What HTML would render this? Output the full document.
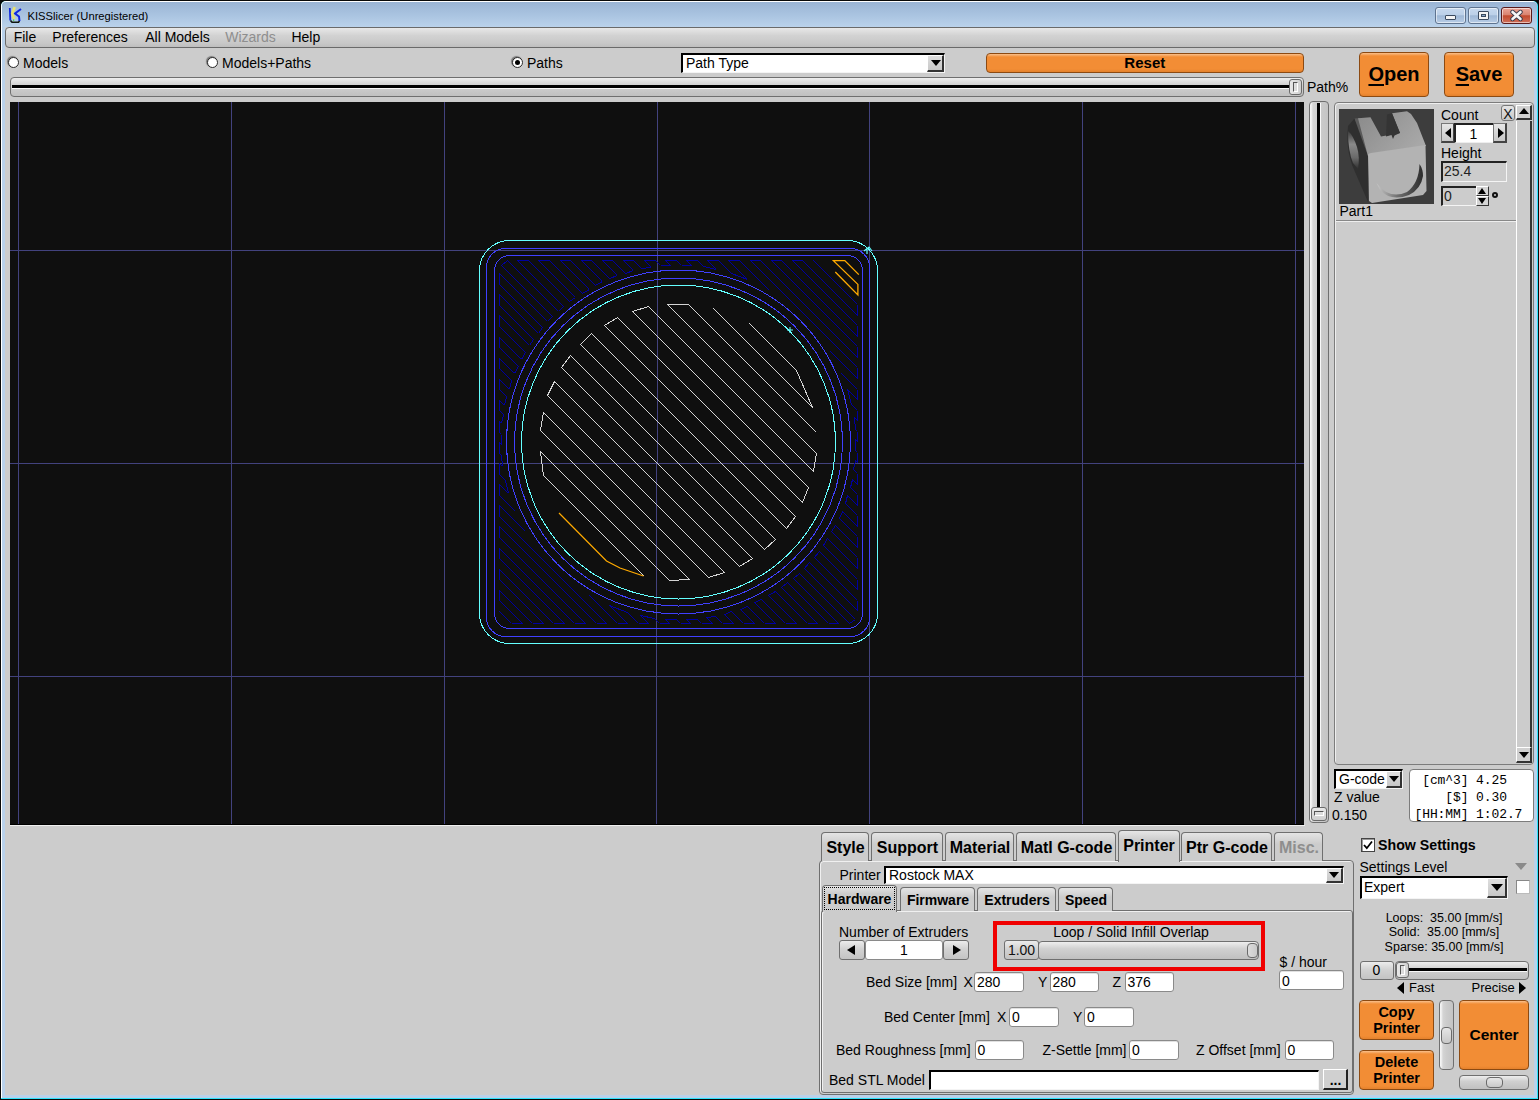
<!DOCTYPE html><html><head><meta charset="utf-8"><style>
*{margin:0;padding:0;box-sizing:border-box}
html,body{width:1539px;height:1100px;overflow:hidden}
body{background:#cccccc;position:relative;font-family:'Liberation Sans',sans-serif}
.a{position:absolute}
.t{white-space:pre}
.btn{border:1px solid #6f6f6f;border-radius:3px;background:linear-gradient(#ececec,#d2d2d2 45%,#c4c4c4)}
.rbox{border:1px solid #7a7a7a;border-radius:3px;background:#cccccc}
.org{border:1px solid #8c4a12;border-radius:4px;background:linear-gradient(#f9c08c 0,#f28d35 3px,#f28d35 calc(100% - 3px),#e4812c)}
.inp{background:#fff;border:1px solid #8a8a8a;border-radius:3px;box-shadow:inset 0 1px 0 #e0e0e0}
.sunk{background:#fff;border-top:2px solid #000;border-left:2px solid #000;border-right:1px solid #f4f4f4;border-bottom:1px solid #f4f4f4}
.sunkg{background:#cccccc;border-top:2px solid #222;border-left:2px solid #222;border-right:1px solid #f4f4f4;border-bottom:1px solid #f4f4f4}
.ddb{background:linear-gradient(#dedede,#c8c8c8);border-right:2px solid #333;border-bottom:2px solid #333;border-top:1px solid #fff;border-left:1px solid #fff}
.tab{border:1px solid #6f6f6f;border-bottom:none;border-radius:4px 4px 0 0;background:linear-gradient(#e4e4e4,#cccccc 40%)}
.sl{border:1px solid #6f6f6f;border-radius:4px;background:linear-gradient(#eeeeee,#d0d0d0 40%,#c0c0c0)}
</style></head><body>
<div class="a " style="left:0px;top:0px;width:1539px;height:1100px;background:#080808"></div>
<div class="a " style="left:1px;top:1px;width:1537px;height:1098px;background:#2ee2fa;border-radius:5px 5px 0 0"></div>
<div class="a " style="left:1px;top:1px;width:1536px;height:1097px;background:#ffffff;border-radius:5px 5px 0 0"></div>
<div class="a " style="left:2px;top:2px;width:1535px;height:1096px;background:#b9d1ea;border-radius:4px 4px 0 0"></div>
<div class="a " style="left:2px;top:2px;width:1535px;height:25px;background:linear-gradient(#9ab4d4,#a9c3e0 50%,#bad2eb);border-radius:4px 4px 0 0"></div>
<div class="a " style="left:5px;top:27px;width:1529px;height:1068px;background:#cccccc"></div>
<svg class="a" style="left:0px;top:0px" width="30" height="30" viewBox="0 0 30 30">
<path d="M9.8 8 L10.3 20.5" stroke="#1028e0" stroke-width="1.8" fill="none"/>
<path d="M21 9 L15 13.5 L19 16.5 L19.5 21" stroke="#1028e0" stroke-width="2" fill="none"/>
<path d="M14.7 7 L12.2 13.5 L14.2 19" stroke="#e6e070" stroke-width="2.6" fill="none"/>
<path d="M10.5 20.5 L12 22.3 L18.5 22.3 L19.5 21" stroke="#101810" stroke-width="1.6" fill="none"/>
<rect x="13" y="19.5" width="1.2" height="1.2" fill="#30d030"/>
</svg>
<div class="a t" style="left:27.5px;top:11px;font:normal 11.2px/11.2px 'Liberation Sans',sans-serif;color:#000;">KISSlicer (Unregistered)</div>
<div class="a " style="left:1435px;top:7px;width:31px;height:17px;border:1px solid #5f7490;border-radius:3px;background:linear-gradient(#c7d9ee,#bcd0e8 45%,#9fb8d6 52%,#b8cde6);box-shadow:inset 0 0 0 1px rgba(255,255,255,0.55)"></div>
<div class="a " style="left:1468px;top:7px;width:31px;height:17px;border:1px solid #5f7490;border-radius:3px;background:linear-gradient(#c7d9ee,#bcd0e8 45%,#9fb8d6 52%,#b8cde6);box-shadow:inset 0 0 0 1px rgba(255,255,255,0.55)"></div>
<div class="a " style="left:1501px;top:7px;width:31px;height:17px;border:1px solid #5a1a1a;border-radius:3px;background:linear-gradient(#eba597,#d98370 45%,#c24a2e 52%,#d0705a);box-shadow:inset 0 0 0 1px rgba(255,255,255,0.55)"></div>
<div class="a " style="left:1445px;top:15px;width:11px;height:5px;background:#f4f4f4;border:1px solid #3b4a5e;border-radius:1px"></div>
<div class="a " style="left:1478px;top:11px;width:11px;height:9px;background:#f4f4f4;border:1px solid #3b4a5e;border-radius:1px"></div>
<div class="a " style="left:1481px;top:14px;width:5px;height:3px;background:#8aa6c6;border:1px solid #3b4a5e"></div>
<svg class="a" style="left:1509px;top:9px" width="16" height="13" viewBox="0 0 16 13">
<path d="M3.5 3 L11.5 10 M11.5 3 L3.5 10" stroke="#3a3a4a" stroke-width="4.4" stroke-linecap="round"/>
<path d="M3.5 3 L11.5 10 M11.5 3 L3.5 10" stroke="#f6f6f6" stroke-width="2.6" stroke-linecap="round"/>
</svg>
<div class="a " style="left:5px;top:27px;width:1530px;height:21px;border:1px solid #6a6a6a;border-radius:4px;background:linear-gradient(#e8e8e8,#d2d2d2 40%,#c8c8c8 80%,#bebebe)"></div>
<div class="a t" style="left:13.7px;top:30px;font:normal 14px/14px 'Liberation Sans',sans-serif;color:#000;">File</div>
<div class="a t" style="left:52.3px;top:30px;font:normal 14px/14px 'Liberation Sans',sans-serif;color:#000;">Preferences</div>
<div class="a t" style="left:145.2px;top:30px;font:normal 14px/14px 'Liberation Sans',sans-serif;color:#000;">All Models</div>
<div class="a t" style="left:225.2px;top:30px;font:normal 14px/14px 'Liberation Sans',sans-serif;color:#8e8e8e;">Wizards</div>
<div class="a t" style="left:291.4px;top:30px;font:normal 14px/14px 'Liberation Sans',sans-serif;color:#000;">Help</div>
<div class="a" style="left:8px;top:57px;width:11px;height:11px;border-radius:50%;background:#fff;border:1.5px solid #2a2a2a;box-shadow:-1px -1px 1px #777"></div>
<div class="a t" style="left:23px;top:56px;font:normal 14px/14px 'Liberation Sans',sans-serif;color:#000;">Models</div>
<div class="a" style="left:207px;top:57px;width:11px;height:11px;border-radius:50%;background:#fff;border:1.5px solid #2a2a2a;box-shadow:-1px -1px 1px #777"></div>
<div class="a t" style="left:222px;top:56px;font:normal 14px/14px 'Liberation Sans',sans-serif;color:#000;">Models+Paths</div>
<div class="a" style="left:512px;top:57px;width:11px;height:11px;border-radius:50%;background:#fff;border:1.5px solid #2a2a2a;box-shadow:-1px -1px 1px #777"></div>
<div class="a" style="left:515px;top:60px;width:5px;height:5px;border-radius:50%;background:#000"></div>
<div class="a t" style="left:527px;top:56px;font:normal 14px/14px 'Liberation Sans',sans-serif;color:#000;">Paths</div>
<div class="a sunk" style="left:681px;top:53px;width:264px;height:20px;"></div>
<div class="a ddb" style="left:927px;top:55px;width:17px;height:17px;"></div>
<div class="a" style="left:931px;top:60px;width:0;height:0;border-left:5px solid transparent;border-right:5px solid transparent;border-top:6px solid #000"></div>
<div class="a t" style="left:686px;top:56px;font:normal 14px/14px 'Liberation Sans',sans-serif;color:#000;">Path Type</div>
<div class="a org" style="left:986px;top:53px;width:318px;height:20px;"></div>
<div class="a t" style="left:1104.8px;top:55px;width:80px;text-align:center;font:bold 15px/15px 'Liberation Sans',sans-serif;color:#000;">Reset</div>
<div class="a org" style="left:1359px;top:52px;width:70px;height:45px;"></div>
<div class="a org" style="left:1444px;top:52px;width:70px;height:45px;"></div>
<div class="a t" style="left:1359px;top:64px;width:70px;text-align:center;font:bold 20px/20px 'Liberation Sans',sans-serif;color:#000;"><u style="text-decoration-thickness:2px;text-underline-offset:3px">O</u>pen</div>
<div class="a t" style="left:1444px;top:64px;width:70px;text-align:center;font:bold 20px/20px 'Liberation Sans',sans-serif;color:#000;"><u style="text-decoration-thickness:2px;text-underline-offset:3px">S</u>ave</div>
<div class="a sl" style="left:10px;top:77px;width:1294px;height:20px;"></div>
<div class="a " style="left:12px;top:85px;width:1278px;height:3px;background:#000"></div>
<div class="a " style="left:12px;top:88px;width:1278px;height:1px;background:#f8f8f8"></div>
<div class="a " style="left:1289px;top:79px;width:13px;height:16px;border:1px solid #6a6a6a;border-radius:3px;background:linear-gradient(90deg,#e8e8e8,#d0d0d0)"></div>
<div class="a " style="left:1293px;top:82px;width:5px;height:10px;border-left:1px solid #555;border-top:1px solid #555;border-right:1px solid #fff;border-bottom:1px solid #fff"></div>
<div class="a t" style="left:1307px;top:80px;font:normal 14px/14px 'Liberation Sans',sans-serif;color:#000;">Path%</div>
<svg class="a" style="left:10px;top:102px" width="1294" height="723" viewBox="10 102 1294 723" shape-rendering="crispEdges">
<rect x="10" y="102" width="1294" height="723" fill="#0f0f0f"/>
<line x1="18.5" y1="102" x2="18.5" y2="825" stroke="#42427e" stroke-width="1"/>
<line x1="231.5" y1="102" x2="231.5" y2="825" stroke="#42427e" stroke-width="1"/>
<line x1="444.5" y1="102" x2="444.5" y2="825" stroke="#42427e" stroke-width="1"/>
<line x1="869.5" y1="102" x2="869.5" y2="825" stroke="#42427e" stroke-width="1"/>
<line x1="1082.5" y1="102" x2="1082.5" y2="825" stroke="#42427e" stroke-width="1"/>
<line x1="1295.5" y1="102" x2="1295.5" y2="825" stroke="#42427e" stroke-width="1"/>
<rect x="657" y="102" width="1" height="361" fill="#42427e"/>
<rect x="656" y="463" width="1" height="362" fill="#42427e"/>
<line x1="10" y1="250.5" x2="1304" y2="250.5" stroke="#42427e" stroke-width="1"/>
<line x1="10" y1="463.5" x2="1304" y2="463.5" stroke="#42427e" stroke-width="1"/>
<line x1="10" y1="676.5" x2="1304" y2="676.5" stroke="#42427e" stroke-width="1"/>
<path d="M499.5 611.5L511.5 623.5M499.5 600.5L522.5 623.5M511.5 623.5L522.5 623.5M499.5 590.5L532.5 623.5M499.5 600.5L499.5 590.5M499.5 579.5L543.5 623.5M532.5 623.5L543.5 623.5M499.5 569.5L553.5 623.5M499.5 579.5L499.5 569.5M499.5 558.5L564.5 623.5M553.5 623.5L564.5 623.5M499.5 548.5L574.5 623.5M499.5 558.5L499.5 548.5M499.5 537.5L585.5 623.5M574.5 623.5L585.5 623.5M499.5 526.5L596.5 623.5M499.5 537.5L499.5 526.5M499.5 516.5L606.5 623.5M596.5 623.5L606.5 623.5M499.5 505.5L525.5 531.5M499.5 516.5L499.5 505.5M589.5 595.5L617.5 623.5M499.5 495.5L515.5 511.5M609.5 605.5L627.5 623.5M617.5 623.5L627.5 623.5M499.5 484.5L508.5 493.5M499.5 495.5L499.5 484.5M627.5 612.5L638.5 623.5M609.5 605.5L627.5 612.5M499.5 474.5L505.5 480.5M508.5 493.5L505.5 480.5M640.5 615.5L648.5 623.5M638.5 623.5L648.5 623.5M499.5 463.5L502.5 466.5M499.5 474.5L499.5 463.5M654.5 618.5L659.5 623.5M640.5 615.5L654.5 618.5M499.5 453.5L501.5 455.5M502.5 466.5L501.5 455.5M665.5 619.5L669.5 623.5M659.5 623.5L669.5 623.5M499.5 442.5L501.5 444.5M499.5 453.5L499.5 442.5M676.5 619.5L680.5 623.5M665.5 619.5L676.5 619.5M499.5 432.5L501.5 434.5M501.5 444.5L501.5 434.5M686.5 619.5L690.5 623.5M680.5 623.5L690.5 623.5M499.5 421.5L501.5 423.5M499.5 432.5L499.5 421.5M697.5 619.5L701.5 623.5M686.5 619.5L697.5 619.5M499.5 410.5L503.5 414.5M501.5 423.5L503.5 414.5M706.5 617.5L712.5 623.5M701.5 623.5L712.5 623.5M499.5 400.5L504.5 405.5M499.5 410.5L499.5 400.5M715.5 616.5L722.5 623.5M706.5 617.5L715.5 616.5M499.5 389.5L506.5 396.5M504.5 405.5L506.5 396.5M724.5 614.5L733.5 623.5M722.5 623.5L733.5 623.5M499.5 379.5L509.5 389.5M499.5 389.5L499.5 379.5M731.5 611.5L743.5 623.5M724.5 614.5L731.5 611.5M499.5 368.5L511.5 380.5M509.5 389.5L511.5 380.5M740.5 609.5L754.5 623.5M743.5 623.5L754.5 623.5M499.5 358.5L514.5 373.5M499.5 368.5L499.5 358.5M747.5 606.5L764.5 623.5M740.5 609.5L747.5 606.5M499.5 347.5L518.5 366.5M514.5 373.5L518.5 366.5M754.5 602.5L775.5 623.5M764.5 623.5L775.5 623.5M499.5 337.5L521.5 359.5M499.5 347.5L499.5 337.5M761.5 599.5L785.5 623.5M754.5 602.5L761.5 599.5M499.5 326.5L525.5 352.5M521.5 359.5L525.5 352.5M768.5 595.5L796.5 623.5M785.5 623.5L796.5 623.5M499.5 315.5L529.5 345.5M499.5 326.5L499.5 315.5M775.5 591.5L807.5 623.5M768.5 595.5L775.5 591.5M499.5 305.5L533.5 339.5M529.5 345.5L533.5 339.5M781.5 587.5L817.5 623.5M807.5 623.5L817.5 623.5M499.5 294.5L538.5 333.5M499.5 305.5L499.5 294.5M787.5 582.5L828.5 623.5M781.5 587.5L787.5 582.5M499.5 284.5L542.5 327.5M538.5 333.5L542.5 327.5M793.5 578.5L838.5 623.5M828.5 623.5L838.5 623.5M499.5 273.5L547.5 321.5M499.5 284.5L499.5 273.5M799.5 573.5L849.5 623.5M793.5 578.5L799.5 573.5M501.5 265.5L552.5 316.5M547.5 321.5L552.5 316.5M804.5 568.5L855.5 619.5M849.5 623.5L855.5 619.5M507.5 260.5L558.5 311.5M501.5 265.5L507.5 260.5M809.5 562.5L857.5 610.5M804.5 568.5L809.5 562.5M517.5 260.5L563.5 306.5M558.5 311.5L563.5 306.5M814.5 557.5L857.5 600.5M857.5 610.5L857.5 600.5M528.5 260.5L569.5 301.5M517.5 260.5L528.5 260.5M819.5 551.5L857.5 589.5M814.5 557.5L819.5 551.5M538.5 260.5L575.5 297.5M569.5 301.5L575.5 297.5M823.5 545.5L857.5 579.5M857.5 589.5L857.5 579.5M549.5 260.5L582.5 293.5M538.5 260.5L549.5 260.5M827.5 538.5L857.5 568.5M823.5 545.5L827.5 538.5M560.5 260.5L589.5 289.5M582.5 293.5L589.5 289.5M831.5 531.5L857.5 557.5M857.5 568.5L857.5 557.5M570.5 260.5L595.5 285.5M560.5 260.5L570.5 260.5M835.5 525.5L857.5 547.5M831.5 531.5L835.5 525.5M581.5 260.5L602.5 281.5M595.5 285.5L602.5 281.5M839.5 518.5L857.5 536.5M857.5 547.5L857.5 536.5M591.5 260.5L609.5 278.5M581.5 260.5L591.5 260.5M842.5 511.5L857.5 526.5M839.5 518.5L842.5 511.5M602.5 260.5L617.5 275.5M609.5 278.5L617.5 275.5M845.5 503.5L857.5 515.5M857.5 526.5L857.5 515.5M612.5 260.5L625.5 273.5M602.5 260.5L612.5 260.5M847.5 495.5L857.5 505.5M845.5 503.5L847.5 495.5M623.5 260.5L633.5 270.5M625.5 273.5L633.5 270.5M850.5 487.5L857.5 494.5M857.5 505.5L857.5 494.5M633.5 260.5L641.5 268.5M623.5 260.5L633.5 260.5M852.5 479.5L857.5 484.5M850.5 487.5L852.5 479.5M644.5 260.5L651.5 267.5M641.5 268.5L651.5 267.5M853.5 469.5L857.5 473.5M857.5 484.5L857.5 473.5M655.5 260.5L660.5 265.5M644.5 260.5L655.5 260.5M855.5 460.5L857.5 462.5M853.5 469.5L855.5 460.5M665.5 260.5L670.5 265.5M660.5 265.5L670.5 265.5M855.5 450.5L857.5 452.5M857.5 462.5L857.5 452.5M676.5 260.5L681.5 265.5M665.5 260.5L676.5 260.5M855.5 439.5L857.5 441.5M855.5 450.5L855.5 439.5M686.5 260.5L691.5 265.5M681.5 265.5L691.5 265.5M855.5 429.5L857.5 431.5M857.5 441.5L857.5 431.5M697.5 260.5L703.5 266.5M686.5 260.5L697.5 260.5M854.5 417.5L857.5 420.5M855.5 429.5L854.5 417.5M707.5 260.5L716.5 269.5M703.5 266.5L716.5 269.5M851.5 404.5L857.5 410.5M857.5 420.5L857.5 410.5M718.5 260.5L731.5 273.5M707.5 260.5L718.5 260.5M847.5 389.5L857.5 399.5M851.5 404.5L847.5 389.5M728.5 260.5L747.5 279.5M731.5 273.5L747.5 279.5M841.5 373.5L857.5 389.5M857.5 399.5L857.5 389.5M739.5 260.5L769.5 290.5M728.5 260.5L739.5 260.5M830.5 351.5L857.5 378.5M750.5 260.5L857.5 367.5M857.5 378.5L857.5 367.5M760.5 260.5L857.5 357.5M750.5 260.5L760.5 260.5M771.5 260.5L857.5 346.5M857.5 357.5L857.5 346.5M781.5 260.5L857.5 336.5M771.5 260.5L781.5 260.5M792.5 260.5L857.5 325.5M857.5 336.5L857.5 325.5M802.5 260.5L857.5 315.5M792.5 260.5L802.5 260.5M813.5 260.5L857.5 304.5M857.5 315.5L857.5 304.5" stroke="#0000a0" stroke-width="1" fill="none"/>
<rect x="479.5" y="240.5" width="398" height="403" rx="30" fill="none" stroke="#64ffff" stroke-width="1"/>
<rect x="486.5" y="248.5" width="383" height="388" rx="19" fill="none" stroke="#4040ff" stroke-width="1"/>
<rect x="494.5" y="255.5" width="368" height="373" rx="15" fill="none" stroke="#4040ff" stroke-width="1"/>
<circle cx="678.5" cy="442" r="172" fill="none" stroke="#4040ff" stroke-width="1"/>
<circle cx="678.5" cy="442" r="164" fill="none" stroke="#4040ff" stroke-width="1"/>
<circle cx="678.5" cy="442" r="157" fill="none" stroke="#64ffff" stroke-width="1"/>
<path d="M644.5 576.5L543.5 475.5L540.5 451.5L669.5 580.5L689.5 579.5L540.5 430.5L543.5 412.5L708.5 577.5L724.5 572.5L547.5 395.5L554.5 381.5L739.5 566.5L752.5 558.5L561.5 367.5L570.5 355.5L764.5 549.5L775.5 539.5L580.5 344.5L591.5 333.5L786.5 528.5L795.5 516.5L604.5 325.5L617.5 317.5L802.5 502.5L808.5 487.5L632.5 311.5L648.5 306.5L813.5 471.5L816.5 453.5L667.5 304.5L688.5 304.5L816.5 432.5M713.5 308.5L812.5 407.5L796.5 370.5L749.5 323.5" stroke="#d4d4d4" stroke-width="1" fill="none"/>
<path d="M559 513L606.5 561L620 568L643.5 576" stroke="#ffaa00" stroke-width="1.2" fill="none" shape-rendering="auto"/>
<path d="M858.8 274.6L844.8 260.6L833.4 260.6L857.9 284.4L857.9 295L835.3 272" stroke="#ffaa00" stroke-width="1.3" fill="none" shape-rendering="auto"/>
<path d="M864 251L869 247L872 251M867 248L867 254" stroke="#64ffff" stroke-width="1.2" fill="none" shape-rendering="auto"/>
<path d="M787 330L793 330M790 327L790 333" stroke="#64ffff" stroke-width="1" fill="none" shape-rendering="auto"/>
</svg>
<div class="a " style="left:10px;top:824px;width:1294px;height:1px;background:#000"></div>
<div class="a " style="left:10px;top:825px;width:1295px;height:1px;background:#f0f0f0"></div>
<div class="a " style="left:1309px;top:101px;width:20px;height:722px;border:1px solid #6f6f6f;border-radius:4px;background:linear-gradient(90deg,#f4f4f4 0,#f4f4f4 1px,#d4d4d4 3px,#cccccc 50%,#c4c4c4)"></div>
<div class="a " style="left:1317px;top:103px;width:3px;height:706px;background:#000"></div>
<div class="a " style="left:1320px;top:103px;width:1px;height:706px;background:#f8f8f8"></div>
<div class="a " style="left:1311px;top:807px;width:16px;height:14px;border:1px solid #6a6a6a;border-radius:3px;background:linear-gradient(#e8e8e8,#cfcfcf)"></div>
<div class="a " style="left:1314px;top:811px;width:10px;height:5px;border-left:1px solid #555;border-top:1px solid #555;border-right:1px solid #fff;border-bottom:1px solid #fff"></div>
<div class="a " style="left:1334px;top:102px;width:200px;height:663px;border:1px solid #7c7c7c;border-radius:4px;background:#cccccc;box-shadow:inset 1px 1px 0 #eee"></div>
<svg class="a" style="left:1339px;top:109px" width="95" height="95" viewBox="0 0 95 95">
<defs>
<linearGradient id="gh" x1="0" y1="0" x2="0" y2="1"><stop offset="0" stop-color="#3a3a3a"/><stop offset="0.35" stop-color="#8a8a8a"/><stop offset="0.7" stop-color="#6a6a6a"/><stop offset="1" stop-color="#303030"/></linearGradient>
<linearGradient id="gl" x1="0" y1="0" x2="1" y2="0.2"><stop offset="0" stop-color="#3a3a3a"/><stop offset="0.3" stop-color="#777"/><stop offset="0.55" stop-color="#3a3a3a"/><stop offset="1" stop-color="#2e2e2e"/></linearGradient>
<linearGradient id="gt" x1="0" y1="0" x2="1" y2="0.6"><stop offset="0" stop-color="#8a8a8a"/><stop offset="0.6" stop-color="#9c9c9c"/><stop offset="1" stop-color="#a8a8a8"/></linearGradient>
<linearGradient id="ga" x1="0" y1="0" x2="1" y2="0"><stop offset="0" stop-color="#c8c8c8"/><stop offset="0.45" stop-color="#707070"/><stop offset="1" stop-color="#2c2c2c"/></linearGradient>
</defs>
<rect width="95" height="95" fill="#3d3d3d"/>
<path d="M15.5 9.5 L9 17 Q7.5 32 10 45 L13 56 L29 93 L31 45 Z" fill="#2f2f2f"/>
<path d="M9 22 Q14 26 18 38 Q21 48 19 60 L14 54 Q9 42 9 22Z" fill="url(#gh)"/>
<path d="M15.5 9.5 L21 9 L31 46 L29 47 Z" fill="#5a5a5a"/>
<path d="M19 9.2 L31.5 8.3 L42 27.5 L61 24 L53 4.3 L68 2.3 L72 5 L78 14 L87 37 L29 47 Z" fill="url(#gt)"/>
<path d="M48 5.5 L53 4.3 L61 24 L55.5 26.5 L54 30 L52.5 26 L47 27.5 Z" fill="#343434"/>
<path d="M29 45.5 Q30 44 32 44 L86.5 36 L87.5 82 L84 86 L33 94 L30 92 Z" fill="#b3b3b3"/>
<path d="M37.5 74 Q50 91 68 83 Q80 74 80.5 55 Q84 60 84 67 Q82 80 70 86 Q52 93 41 81 Z" fill="url(#ga)"/>
</svg>
<div class="a t" style="left:1339.5px;top:204px;font:normal 14px/14px 'Liberation Sans',sans-serif;color:#000;">Part1</div>
<div class="a " style="left:1336px;top:220px;width:180px;height:1px;background:#888"></div>
<div class="a " style="left:1336px;top:221px;width:180px;height:1px;background:#eee"></div>
<div class="a t" style="left:1441px;top:108px;font:normal 14px/14px 'Liberation Sans',sans-serif;color:#000;">Count</div>
<div class="a " style="left:1441px;top:123px;width:14px;height:20px;border:1px solid #777;border-right:2px solid #444;border-bottom:2px solid #444;background:linear-gradient(#e6e6e6,#c8c8c8)"></div>
<div class="a " style="left:1454px;top:123px;width:40px;height:20px;background:#fff;border-top:2px solid #222;border-left:2px solid #222;border-right:1px solid #eee;border-bottom:1px solid #eee"></div>
<div class="a " style="left:1493px;top:123px;width:14px;height:20px;border:1px solid #777;border-right:2px solid #444;border-bottom:2px solid #444;background:linear-gradient(#e6e6e6,#c8c8c8)"></div>
<div class="a" style="left:1445px;top:128px;width:0;height:0;border-top:5px solid transparent;border-bottom:5px solid transparent;border-right:6px solid #000"></div>
<div class="a" style="left:1498px;top:128px;width:0;height:0;border-top:5px solid transparent;border-bottom:5px solid transparent;border-left:6px solid #000"></div>
<div class="a t" style="left:1458.5px;top:127px;width:30px;text-align:center;font:normal 14px/14px 'Liberation Sans',sans-serif;color:#000;">1</div>
<div class="a t" style="left:1441px;top:146px;font:normal 14px/14px 'Liberation Sans',sans-serif;color:#000;">Height</div>
<div class="a sunkg" style="left:1441px;top:161px;width:66px;height:21px;"></div>
<div class="a t" style="left:1444px;top:164px;font:normal 14px/14px 'Liberation Sans',sans-serif;color:#222;">25.4</div>
<div class="a sunkg" style="left:1441px;top:186px;width:36px;height:20px;"></div>
<div class="a t" style="left:1444px;top:189px;font:normal 14px/14px 'Liberation Sans',sans-serif;color:#222;">0</div>
<div class="a " style="left:1476px;top:186px;width:13px;height:10px;border:1px solid #fff;border-right:1px solid #333;border-bottom:1px solid #333;background:#d4d4d4"></div>
<div class="a " style="left:1476px;top:196px;width:13px;height:10px;border:1px solid #fff;border-right:1px solid #333;border-bottom:1px solid #333;background:#d4d4d4"></div>
<div class="a" style="left:1478px;top:188px;width:0;height:0;border-left:4.5px solid transparent;border-right:4.5px solid transparent;border-bottom:6px solid #000"></div>
<div class="a" style="left:1478px;top:198px;width:0;height:0;border-left:4.5px solid transparent;border-right:4.5px solid transparent;border-top:6px solid #000"></div>
<div class="a" style="left:1491.5px;top:191.5px;width:6.5px;height:6.5px;border:2px solid #111;border-radius:50%"></div>
<div class="a " style="left:1501px;top:105px;width:14px;height:16px;border:1px solid #777;border-radius:3px;background:linear-gradient(#e4e4e4,#c8c8c8)"></div>
<div class="a t" style="left:1501px;top:106.5px;width:14px;text-align:center;font:normal 14px/14px 'Liberation Sans',sans-serif;color:#111;">X</div>
<div class="a " style="left:1516px;top:105px;width:16px;height:15px;border:1px solid #fff;border-right:2px solid #333;border-bottom:2px solid #333;background:#d0d0d0"></div>
<div class="a" style="left:1519px;top:108px;width:0;height:0;border-left:5px solid transparent;border-right:5px solid transparent;border-bottom:6px solid #000"></div>
<div class="a " style="left:1516px;top:121px;width:16px;height:626px;border-left:1px solid #fff;border-right:2px solid #333;background:#cccccc"></div>
<div class="a " style="left:1516px;top:747px;width:16px;height:16px;border:1px solid #fff;border-right:2px solid #333;border-bottom:2px solid #333;background:#d0d0d0"></div>
<div class="a" style="left:1519px;top:752px;width:0;height:0;border-left:5px solid transparent;border-right:5px solid transparent;border-top:6px solid #000"></div>
<div class="a sunk" style="left:1334px;top:769px;width:69px;height:20px;"></div>
<div class="a ddb" style="left:1386px;top:771px;width:16px;height:17px;"></div>
<div class="a" style="left:1389px;top:776px;width:0;height:0;border-left:5px solid transparent;border-right:5px solid transparent;border-top:6px solid #000"></div>
<div class="a t" style="left:1339px;top:772px;font:normal 14px/14px 'Liberation Sans',sans-serif;color:#000;">G-code</div>
<div class="a t" style="left:1334px;top:790px;font:normal 14px/14px 'Liberation Sans',sans-serif;color:#000;">Z value</div>
<div class="a t" style="left:1332px;top:808px;font:normal 14px/14px 'Liberation Sans',sans-serif;color:#000;">0.150</div>
<div class="a " style="left:1409px;top:769px;width:125px;height:53px;background:#fff;border:1px solid #7c7c7c;border-radius:4px"></div>
<div class="a t" style="left:1414.5px;top:774px;font:normal 13px/13px 'Liberation Mono',monospace;color:#000;letter-spacing:-0.1px">&nbsp;[cm^3]&nbsp;4.25</div>
<div class="a t" style="left:1414.5px;top:791px;font:normal 13px/13px 'Liberation Mono',monospace;color:#000;letter-spacing:-0.1px">&nbsp;&nbsp;&nbsp;&nbsp;[$]&nbsp;0.30</div>
<div class="a t" style="left:1414.5px;top:807.5px;font:normal 13px/13px 'Liberation Mono',monospace;color:#000;letter-spacing:-0.1px">[HH:MM]&nbsp;1:02.7</div>
<div class="a " style="left:819px;top:860px;width:535px;height:235px;border:1px solid #6f6f6f;border-radius:4px;background:#cccccc;box-shadow:inset 1px 1px 0 #f0f0f0"></div>
<div class="a tab" style="left:821px;top:832px;width:48px;height:29px;"></div>
<div class="a t" style="left:821.5px;top:840px;width:48px;text-align:center;font:bold 16px/16px 'Liberation Sans',sans-serif;color:#000;">Style</div>
<div class="a tab" style="left:871px;top:832px;width:72px;height:29px;"></div>
<div class="a t" style="left:871.5px;top:840px;width:72px;text-align:center;font:bold 16px/16px 'Liberation Sans',sans-serif;color:#000;">Support</div>
<div class="a tab" style="left:945px;top:832px;width:69px;height:29px;"></div>
<div class="a t" style="left:945.5px;top:840px;width:69px;text-align:center;font:bold 16px/16px 'Liberation Sans',sans-serif;color:#000;">Material</div>
<div class="a tab" style="left:1016px;top:832px;width:100px;height:29px;"></div>
<div class="a t" style="left:1016.5px;top:840px;width:100px;text-align:center;font:bold 16px/16px 'Liberation Sans',sans-serif;color:#000;">Matl G-code</div>
<div class="a " style="left:1118px;top:830px;width:62px;height:32px;border:1px solid #6f6f6f;border-bottom:none;border-radius:4px 4px 0 0;background:linear-gradient(#e6e6e6,#cccccc 30%);z-index:2"></div>
<div class="a t" style="left:1118px;top:837.5px;width:62px;text-align:center;font:bold 16px/16px 'Liberation Sans',sans-serif;color:#000;z-index:3">Printer</div>
<div class="a tab" style="left:1181px;top:832px;width:91px;height:29px;"></div>
<div class="a t" style="left:1181.5px;top:840px;width:91px;text-align:center;font:bold 16px/16px 'Liberation Sans',sans-serif;color:#000;">Ptr G-code</div>
<div class="a tab" style="left:1274px;top:832px;width:49px;height:29px;"></div>
<div class="a t" style="left:1274.5px;top:840px;width:49px;text-align:center;font:bold 16px/16px 'Liberation Sans',sans-serif;color:#8e8e8e;">Misc.</div>
<div class="a t" style="left:839.5px;top:868px;font:normal 14px/14px 'Liberation Sans',sans-serif;color:#000;">Printer</div>
<div class="a sunk" style="left:884px;top:866px;width:460px;height:18px;"></div>
<div class="a ddb" style="left:1326px;top:868px;width:17px;height:15px;"></div>
<div class="a" style="left:1329px;top:872px;width:0;height:0;border-left:5px solid transparent;border-right:5px solid transparent;border-top:6px solid #000"></div>
<div class="a t" style="left:889px;top:868px;font:normal 14px/14px 'Liberation Sans',sans-serif;color:#000;">Rostock MAX</div>
<div class="a " style="left:821px;top:910px;width:532px;height:183px;border:1px solid #6f6f6f;border-radius:3px;background:#cccccc;box-shadow:inset 1px 1px 0 #f0f0f0"></div>
<div class="a " style="left:822px;top:885px;width:75px;height:27px;border:1px solid #6f6f6f;border-bottom:none;border-radius:4px 4px 0 0;background:linear-gradient(#e6e6e6,#cccccc 30%);z-index:2"></div>
<div class="a " style="left:824px;top:887px;width:71px;height:23px;border:1px dotted #000;z-index:3"></div>
<div class="a t" style="left:822px;top:892px;width:75px;text-align:center;font:bold 14px/14px 'Liberation Sans',sans-serif;color:#000;z-index:3">Hardware</div>
<div class="a tab" style="left:900px;top:887px;width:75px;height:24px;"></div>
<div class="a t" style="left:900.5px;top:892.5px;width:75px;text-align:center;font:bold 14px/14px 'Liberation Sans',sans-serif;color:#000;">Firmware</div>
<div class="a tab" style="left:977px;top:887px;width:79px;height:24px;"></div>
<div class="a t" style="left:977.5px;top:892.5px;width:79px;text-align:center;font:bold 14px/14px 'Liberation Sans',sans-serif;color:#000;">Extruders</div>
<div class="a tab" style="left:1058px;top:887px;width:55px;height:24px;"></div>
<div class="a t" style="left:1058.5px;top:892.5px;width:55px;text-align:center;font:bold 14px/14px 'Liberation Sans',sans-serif;color:#000;">Speed</div>
<div class="a t" style="left:839px;top:925px;font:normal 14px/14px 'Liberation Sans',sans-serif;color:#000;">Number of Extruders</div>
<div class="a btn" style="left:839px;top:940px;width:26px;height:20px;"></div>
<div class="a " style="left:865px;top:940px;width:78px;height:20px;background:#fff;border:1px solid #8a8a8a;border-radius:3px"></div>
<div class="a btn" style="left:943px;top:940px;width:26px;height:20px;"></div>
<div class="a" style="left:847px;top:945px;width:0;height:0;border-top:5px solid transparent;border-bottom:5px solid transparent;border-right:8px solid #000"></div>
<div class="a" style="left:953px;top:945px;width:0;height:0;border-top:5px solid transparent;border-bottom:5px solid transparent;border-left:8px solid #000"></div>
<div class="a t" style="left:889px;top:943px;width:30px;text-align:center;font:normal 14px/14px 'Liberation Sans',sans-serif;color:#000;">1</div>
<div class="a " style="left:993px;top:921px;width:272px;height:50px;border:4px solid #f00000"></div>
<div class="a t" style="left:1011px;top:925px;width:240px;text-align:center;font:normal 14px/14px 'Liberation Sans',sans-serif;color:#000;">Loop / Solid Infill Overlap</div>
<div class="a btn" style="left:1004px;top:940px;width:35px;height:20px;"></div>
<div class="a t" style="left:1004px;top:943px;width:35px;text-align:center;font:normal 14px/14px 'Liberation Sans',sans-serif;color:#111;">1.00</div>
<div class="a sl" style="left:1038px;top:941px;width:221px;height:19px;"></div>
<div class="a " style="left:1247px;top:943px;width:11px;height:15px;border:1px solid #6a6a6a;border-radius:4px;background:linear-gradient(90deg,#dcdcdc,#cacaca)"></div>
<div class="a t" style="left:1279.5px;top:954.5px;font:normal 14px/14px 'Liberation Sans',sans-serif;color:#000;">$ / hour</div>
<div class="a inp" style="left:1279px;top:970px;width:65px;height:20px;"></div>
<div class="a t" style="left:1282px;top:973.5px;font:normal 14px/14px 'Liberation Sans',sans-serif;color:#000;">0</div>
<div class="a t" style="left:866px;top:975px;font:normal 14px/14px 'Liberation Sans',sans-serif;color:#000;">Bed Size [mm]</div>
<div class="a inp" style="left:974px;top:972px;width:50px;height:20px;"></div>
<div class="a t" style="left:977px;top:975px;font:normal 14px/14px 'Liberation Sans',sans-serif;color:#000;">280</div>
<div class="a t" style="left:963.5px;top:975px;font:normal 14px/14px 'Liberation Sans',sans-serif;color:#000;">X</div>
<div class="a t" style="left:1038px;top:975px;font:normal 14px/14px 'Liberation Sans',sans-serif;color:#000;">Y</div>
<div class="a inp" style="left:1049.5px;top:972px;width:49.5px;height:20px;"></div>
<div class="a t" style="left:1052.5px;top:975px;font:normal 14px/14px 'Liberation Sans',sans-serif;color:#000;">280</div>
<div class="a t" style="left:1112.5px;top:975px;font:normal 14px/14px 'Liberation Sans',sans-serif;color:#000;">Z</div>
<div class="a inp" style="left:1124.5px;top:972px;width:49.5px;height:20px;"></div>
<div class="a t" style="left:1127.5px;top:975px;font:normal 14px/14px 'Liberation Sans',sans-serif;color:#000;">376</div>
<div class="a t" style="left:884px;top:1010px;font:normal 14px/14px 'Liberation Sans',sans-serif;color:#000;">Bed Center [mm]</div>
<div class="a inp" style="left:1009px;top:1007px;width:50px;height:20px;"></div>
<div class="a t" style="left:1012px;top:1010px;font:normal 14px/14px 'Liberation Sans',sans-serif;color:#000;">0</div>
<div class="a t" style="left:997px;top:1010px;font:normal 14px/14px 'Liberation Sans',sans-serif;color:#000;">X</div>
<div class="a t" style="left:1073px;top:1010px;font:normal 14px/14px 'Liberation Sans',sans-serif;color:#000;">Y</div>
<div class="a inp" style="left:1084px;top:1007px;width:50px;height:20px;"></div>
<div class="a t" style="left:1087px;top:1010px;font:normal 14px/14px 'Liberation Sans',sans-serif;color:#000;">0</div>
<div class="a t" style="left:836px;top:1042.5px;font:normal 14px/14px 'Liberation Sans',sans-serif;color:#000;">Bed Roughness [mm]</div>
<div class="a inp" style="left:974.5px;top:1040px;width:49.5px;height:20px;"></div>
<div class="a t" style="left:977.5px;top:1042.5px;font:normal 14px/14px 'Liberation Sans',sans-serif;color:#000;">0</div>
<div class="a t" style="left:1042.5px;top:1042.5px;font:normal 14px/14px 'Liberation Sans',sans-serif;color:#000;">Z-Settle [mm]</div>
<div class="a inp" style="left:1129px;top:1040px;width:50px;height:20px;"></div>
<div class="a t" style="left:1132px;top:1042.5px;font:normal 14px/14px 'Liberation Sans',sans-serif;color:#000;">0</div>
<div class="a t" style="left:1196px;top:1042.5px;font:normal 14px/14px 'Liberation Sans',sans-serif;color:#000;">Z Offset [mm]</div>
<div class="a inp" style="left:1284.5px;top:1040px;width:49.5px;height:20px;"></div>
<div class="a t" style="left:1287.5px;top:1042.5px;font:normal 14px/14px 'Liberation Sans',sans-serif;color:#000;">0</div>
<div class="a t" style="left:829px;top:1072.5px;font:normal 14px/14px 'Liberation Sans',sans-serif;color:#000;">Bed STL Model</div>
<div class="a sunk" style="left:929px;top:1070px;width:390px;height:20px;"></div>
<div class="a " style="left:1323px;top:1069px;width:25px;height:21px;border:1px solid #fff;border-right:2px solid #222;border-bottom:2px solid #222;background:#d0d0d0"></div>
<div class="a t" style="left:1323.5px;top:1073px;width:24px;text-align:center;font:bold 14px/14px 'Liberation Sans',sans-serif;color:#000;">...</div>
<div class="a " style="left:1361px;top:838px;width:14px;height:14px;background:#fff;border:1px solid #444;box-shadow:inset 1px 1px 0 #999"></div>
<svg class="a" style="left:1362px;top:839px" width="12" height="12" viewBox="0 0 12 12"><path d="M2 6 L4.8 9.2 L10 2.5" stroke="#000" stroke-width="1.8" fill="none"/></svg>
<div class="a t" style="left:1378px;top:838px;font:bold 14.2px/14.2px 'Liberation Sans',sans-serif;color:#000;">Show Settings</div>
<div class="a t" style="left:1359.5px;top:860px;font:normal 14px/14px 'Liberation Sans',sans-serif;color:#000;">Settings Level</div>
<div class="a" style="left:1515px;top:863px;width:0;height:0;border-left:6.5px solid transparent;border-right:6.5px solid transparent;border-top:7px solid #8a8a8a"></div>
<div class="a sunk" style="left:1359.5px;top:875.5px;width:148.5px;height:23.5px;"></div>
<div class="a ddb" style="left:1487px;top:877.5px;width:20px;height:20.5px;"></div>
<div class="a" style="left:1491px;top:884px;width:0;height:0;border-left:6px solid transparent;border-right:6px solid transparent;border-top:7px solid #000"></div>
<div class="a t" style="left:1364px;top:880px;font:normal 14px/14px 'Liberation Sans',sans-serif;color:#000;">Expert</div>
<div class="a " style="left:1516px;top:880px;width:14px;height:14px;background:#fff;border:1px solid #bbb;border-top-color:#888;border-left-color:#888"></div>
<div class="a t" style="left:1364px;top:911.75px;width:160px;text-align:center;font:normal 12.5px/12.5px 'Liberation Sans',sans-serif;color:#000;">Loops:&nbsp; 35.00 [mm/s]</div>
<div class="a t" style="left:1364px;top:926.25px;width:160px;text-align:center;font:normal 12.5px/12.5px 'Liberation Sans',sans-serif;color:#000;">Solid:&nbsp; 35.00 [mm/s]</div>
<div class="a t" style="left:1364px;top:941.25px;width:160px;text-align:center;font:normal 12.5px/12.5px 'Liberation Sans',sans-serif;color:#000;">Sparse: 35.00 [mm/s]</div>
<div class="a btn" style="left:1359.5px;top:960.5px;width:34.5px;height:19px;"></div>
<div class="a t" style="left:1361.5px;top:963px;width:30px;text-align:center;font:normal 14px/14px 'Liberation Sans',sans-serif;color:#000;">0</div>
<div class="a sl" style="left:1394.5px;top:960.5px;width:134.5px;height:19px;"></div>
<div class="a " style="left:1407px;top:968px;width:120px;height:3px;background:#000"></div>
<div class="a " style="left:1407px;top:971px;width:120px;height:1px;background:#f8f8f8"></div>
<div class="a " style="left:1396px;top:962px;width:13px;height:16px;border:1px solid #6a6a6a;border-radius:3px;background:linear-gradient(90deg,#e8e8e8,#cfcfcf)"></div>
<div class="a " style="left:1400px;top:965px;width:5px;height:10px;border-left:1px solid #555;border-top:1px solid #555;border-right:1px solid #fff;border-bottom:1px solid #fff"></div>
<div class="a" style="left:1397px;top:982px;width:0;height:0;border-top:6px solid transparent;border-bottom:6px solid transparent;border-right:7px solid #000"></div>
<div class="a t" style="left:1409px;top:980.5px;font:normal 13px/13px 'Liberation Sans',sans-serif;color:#000;">Fast</div>
<div class="a t" style="left:1471.5px;top:980.5px;font:normal 13px/13px 'Liberation Sans',sans-serif;color:#000;">Precise</div>
<div class="a" style="left:1518.5px;top:982px;width:0;height:0;border-top:6px solid transparent;border-bottom:6px solid transparent;border-left:7px solid #000"></div>
<div class="a org" style="left:1359px;top:1000px;width:75px;height:40px;"></div>
<div class="a t" style="left:1361.5px;top:1004.5px;width:70px;text-align:center;font:bold 14.5px/14.5px 'Liberation Sans',sans-serif;color:#000;">Copy</div>
<div class="a t" style="left:1361.5px;top:1020.5px;width:70px;text-align:center;font:bold 14.5px/14.5px 'Liberation Sans',sans-serif;color:#000;">Printer</div>
<div class="a org" style="left:1359px;top:1050px;width:75px;height:40px;"></div>
<div class="a t" style="left:1361.5px;top:1054.5px;width:70px;text-align:center;font:bold 14.5px/14.5px 'Liberation Sans',sans-serif;color:#000;">Delete</div>
<div class="a t" style="left:1361.5px;top:1070.5px;width:70px;text-align:center;font:bold 14.5px/14.5px 'Liberation Sans',sans-serif;color:#000;">Printer</div>
<div class="a " style="left:1439px;top:1000px;width:15px;height:70px;border:1px solid #6f6f6f;border-radius:4px;background:linear-gradient(90deg,#f4f4f4 0,#f4f4f4 1px,#d4d4d4 3px,#cccccc 50%,#c4c4c4)"></div>
<div class="a " style="left:1441px;top:1027px;width:11px;height:17px;border:1px solid #6a6a6a;border-radius:4px;background:linear-gradient(#e6e6e6,#c8c8c8)"></div>
<div class="a org" style="left:1459px;top:1000px;width:70px;height:70px;"></div>
<div class="a t" style="left:1459px;top:1027px;width:70px;text-align:center;font:bold 15.5px/15.5px 'Liberation Sans',sans-serif;color:#000;">Center</div>
<div class="a sl" style="left:1459px;top:1074.5px;width:70px;height:15.5px;"></div>
<div class="a " style="left:1486px;top:1077px;width:17px;height:11px;border:1px solid #6a6a6a;border-radius:4px;background:linear-gradient(#e6e6e6,#c8c8c8)"></div>
</body></html>
